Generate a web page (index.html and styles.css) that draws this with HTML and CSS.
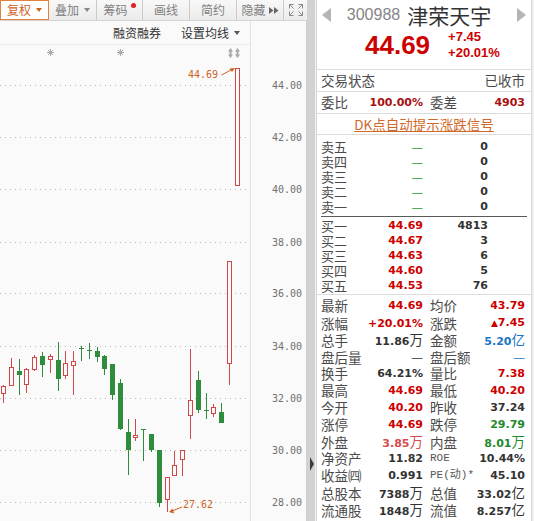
FILE: index.html
```html
<!DOCTYPE html>
<html lang="zh-CN">
<head>
  <meta charset="UTF-8" />
  <title>300988 津荣天宇</title>
  <link rel="stylesheet" href="styles.css">
</head>
<body>
  <div class="page">
    <!-- K线区 -->
    <section class="chart">
      <div class="toolbar">
        <span class="tb-btn tb-fq tb-active">复权<i class="caret"></i></span>
        <span class="tb-btn tb-add">叠加<i class="caret"></i></span>
        <span class="tb-btn tb-chip">筹码<i class="dot"></i></span>
        <span class="tb-btn">画线</span>
        <span class="tb-btn">简约</span>
        <span class="tb-btn">隐藏<svg class="ff" width="10" height="7" viewBox="0 0 10 7"><path d="M0 0L4.5 3.5L0 7ZM5 0L9.5 3.5L5 7Z"/></svg></span>
        <span class="tb-btn tb-full">
          <svg width="16" height="14" viewBox="0 0 16 14"><path d="M1.5 5.5V1.5H5.5M1.5 1.5L5.5 5.5M10.5 1.5H14.5V5.5M14.5 1.5L10.5 5.5M1.5 8.5V12.5H5.5M1.5 12.5L5.5 8.5M10.5 12.5H14.5V8.5M14.5 12.5L10.5 8.5"/></svg>
        </span>
      </div>
      <div class="chart-main">
        <div class="plot">
          <div class="plot-head"><span>融资融券</span><span class="ma-set">设置均线<i class="caret dark"></i></span></div>
          <svg class="kline" width="250" height="476" viewBox="0 45 250 476">
            <g class="grid">
              <path d="M0 85.5H250M0 137.5H250M0 189.5H250M0 242.5H250M0 293.5H250M0 346.5H250M0 398.5H250M0 450.5H250M0 502.5H250"/>
            </g>
            <g class="marks">
              <g transform="translate(50.5 52.5)"><path d="M-3.5 0H3.5M0 -3.5V3.5M-2.5 -2.5L2.5 2.5M-2.5 2.5L2.5 -2.5"/><circle r="1.8"/></g>
              <g transform="translate(120.5 52.5)"><path d="M-3.5 0H3.5M0 -3.5V3.5M-2.5 -2.5L2.5 2.5M-2.5 2.5L2.5 -2.5"/><circle r="1.8"/></g>
              <path class="updown" d="M230.5 48L233 51.5H228ZM229.5 51.5H231.5V54.5H229.5ZM230.5 58L233 54.5H228ZM237.5 48L240 51.5H235ZM236.5 51.5H238.5V54.5H236.5ZM237.5 58L240 54.5H235Z"/>
            </g>
            <path class="wick-up" d="M3.5 385V386M3.5 393V403M11.5 358V367M26.5 368V369M26.5 384V393M34.5 355V357M34.5 369V371M50.5 354V356M50.5 359V373M65.5 351V363M65.5 375V379M73.5 351V361M73.5 365V395M135.5 419V435M135.5 437V441M167.5 499V512M174.5 451V465M182.5 459V476M190.5 349V400M190.5 415V439M213.5 404V407M213.5 413V417M229.5 363V385"/>
            <g class="up">
              <rect x="1.5" y="386.5" width="4" height="7"/>
              <rect x="9.5" y="367.5" width="4" height="18"/>
              <rect x="24.5" y="369.5" width="4" height="15"/>
              <rect x="32.5" y="357.5" width="4" height="12"/>
              <rect x="48.5" y="356.5" width="4" height="3"/>
              <rect x="63.5" y="363.5" width="4" height="12"/>
              <rect x="71.5" y="361.5" width="4" height="4"/>
              <rect x="133.5" y="435.5" width="4" height="2"/>
              <rect x="165.5" y="477.5" width="4" height="22"/>
              <rect x="172.5" y="465.5" width="4" height="10"/>
              <rect x="180.5" y="450.5" width="4" height="9"/>
              <rect x="188.5" y="400.5" width="4" height="15"/>
              <rect x="211.5" y="407.5" width="4" height="6"/>
              <rect x="227.5" y="261.5" width="4" height="102"/>
              <rect x="235.5" y="68.5" width="4" height="117"/>
            </g>
            <path class="wick-down" d="M19.5 359V395M42.5 352V377M58.5 342V391M97.5 347V362M104.5 355V375M112.5 364V400M120.5 379V430M128.5 419V475M151.5 434V452M159.5 450V507M198.5 371V413M221.5 403V423M81.5 346V361M89.5 343V359M143.5 429V461M206.5 393V419M79 348.5H84M87 350.5H92M141 429.5H146M204 410.5H209"/>
            <g class="down">
              <rect x="17" y="371" width="5" height="4"/>
              <rect x="40" y="356" width="5" height="9"/>
              <rect x="56" y="360" width="5" height="19"/>
              <rect x="95" y="351" width="5" height="6"/>
              <rect x="102" y="356" width="5" height="13"/>
              <rect x="110" y="364" width="5" height="31"/>
              <rect x="118" y="383" width="5" height="46"/>
              <rect x="126" y="432" width="5" height="18"/>
              <rect x="149" y="434" width="5" height="16"/>
              <rect x="157" y="450" width="5" height="53"/>
              <rect x="196" y="380" width="5" height="30"/>
              <rect x="219" y="412" width="5" height="11"/>
            </g>
            <g class="note">
              <text x="188" y="78">44.69</text>
              <path d="M221.5 75L232 69.5"/>
              <polygon points="235,68 229.5,68.5 232,72"/>
              <text x="183" y="508">27.62</text>
              <path d="M182 507L172 511"/>
              <polygon points="169,512 174,513.5 172.5,508.5"/>
            </g>
          </svg>
        </div>
        <svg class="axis" width="55" height="500" viewBox="251 21 55 500">
          <text x="272" y="88.5">44.00</text>
          <text x="272" y="141">42.00</text>
          <text x="272" y="193">40.00</text>
          <text x="272" y="245.5">38.00</text>
          <text x="272" y="297">36.00</text>
          <text x="272" y="349.5">34.00</text>
          <text x="272" y="401.5">32.00</text>
          <text x="272" y="453.5">30.00</text>
          <text x="272" y="506">28.00</text>
        </svg>
      </div>
    </section>

    <div class="divider"><i class="tri"></i></div>

    <!-- 报价面板 -->
    <section class="quote">
      <div class="q-head">
        <i class="arrow arrow-l"></i>
        <div class="q-title"><span class="q-code">300988</span><span class="q-name">津荣天宇</span></div>
        <i class="arrow arrow-r"></i>
      </div>
      <div class="q-price">
        <span class="q-last">44.69</span>
        <div class="q-chg"><span>+7.45</span><span>+20.01%</span></div>
      </div>
      <div class="q-row q-status"><span>交易状态</span><span>已收市</span></div>
      <div class="q-row kv q-wei"><span>委比</span><b class="v dred">100.00%</b><span>委差</span><b class="v dred">4903</b></div>
      <div class="q-row q-dk"><a>DK点自动提示涨跌信号</a></div>

      <div class="q-row book">
        <div class="ob"><span>卖五</span><b class="v dash">—</b><b class="v">0</b></div>
        <div class="ob"><span>卖四</span><b class="v dash">—</b><b class="v">0</b></div>
        <div class="ob"><span>卖三</span><b class="v dash">—</b><b class="v">0</b></div>
        <div class="ob"><span>卖二</span><b class="v dash">—</b><b class="v">0</b></div>
        <div class="ob"><span>卖一</span><b class="v dash">—</b><b class="v">0</b></div>
        <div class="book-sep"></div>
        <div class="ob"><span>买一</span><b class="v red">44.69</b><b class="v">4813</b></div>
        <div class="ob"><span>买二</span><b class="v red">44.67</b><b class="v">3</b></div>
        <div class="ob"><span>买三</span><b class="v red">44.63</b><b class="v">6</b></div>
        <div class="ob"><span>买四</span><b class="v red">44.60</b><b class="v">5</b></div>
        <div class="ob"><span>买五</span><b class="v red">44.53</b><b class="v">76</b></div>
      </div>

      <div class="q-row stats">
        <div class="kv"><span>最新</span><b class="v red">44.69</b><span>均价</span><b class="v red">43.79</b></div>
        <div class="kv"><span>涨幅</span><b class="v red">+20.01%</b><span>涨跌</span><b class="v red"><small>▲</small>7.45</b></div>
        <div class="kv"><span>总手</span><b class="v">11.86<span class="u">万</span></b><span>金额</span><b class="v blue">5.20<span class="u">亿</span></b></div>
        <div class="kv"><span>盘后量</span><b class="v"><span class="u">—</span></b><span>盘后额</span><b class="v blue"><span class="u">—</span></b></div>
        <div class="kv"><span>换手</span><b class="v">64.21%</b><span>量比</span><b class="v red">7.38</b></div>
        <div class="kv"><span>最高</span><b class="v red">44.69</b><span>最低</span><b class="v red">40.20</b></div>
        <div class="kv"><span>今开</span><b class="v red">40.20</b><span>昨收</span><b class="v">37.24</b></div>
        <div class="kv"><span>涨停</span><b class="v red">44.69</b><span>跌停</span><b class="v green">29.79</b></div>
        <div class="kv"><span>外盘</span><b class="v lred">3.85<span class="u">万</span></b><span>内盘</span><b class="v green">8.01<span class="u">万</span></b></div>
        <div class="kv"><span>净资产</span><b class="v">11.82</b><span class="lat">ROE</span><b class="v">10.44%</b></div>
        <div class="kv"><span>收益㈣</span><b class="v">0.991</b><span class="lat">PE(动)*</span><b class="v">45.10</b></div>
        <div class="kv"><span>总股本</span><b class="v">7388<span class="u">万</span></b><span>总值</span><b class="v">33.02<span class="u">亿</span></b></div>
        <div class="kv"><span>流通股</span><b class="v">1848<span class="u">万</span></b><span>流值</span><b class="v">8.257<span class="u">亿</span></b></div>
      </div>
    </section>
  </div>
</body>
</html>
```

FILE: styles.css
```css
body {
  margin: 0;
  background: #f0f0f0;
  font-family: "Noto Sans CJK SC", sans-serif;
}

.page {
  display: flex;
  width: 534px;
  height: 521px;
  overflow: hidden;
}

/* chart */
.chart {
  width: 307px;
  flex-shrink: 0;
  background: #fafafa;
}

.toolbar {
  display: flex;
  height: 20px;
  border-bottom: 1px solid #d4d4d4;
  background: linear-gradient(#f8f8f8, #ebebeb);
}

.tb-btn {
  display: flex;
  align-items: center;
  justify-content: center;
  gap: 5px;
  width: 47px;
  box-sizing: border-box;
  border-right: 1px solid #cacaca;
  font-size: 12px;
  line-height: 20px;
  color: #808080;
}

.tb-fq { width: 49px; }
.tb-add { width: 48px; }
.tb-chip { width: 46px; gap: 3px; }
.tb-full { width: 23px; border-right: none; }

.tb-active {
  border: 1px solid #e2823f;
  background: #fff;
  color: #d0621e;
}

.caret {
  width: 0;
  height: 0;
  border-left: 3px solid transparent;
  border-right: 3px solid transparent;
  border-top: 4px solid #888;
}

.tb-active .caret { border-top-color: #d0621e; }
.caret.dark { border-top-color: #555; }

.dot {
  width: 5px;
  height: 5px;
  border-radius: 50%;
  background: #e32020;
  margin-top: -9px;
}

.ff { fill: #666; margin-left: -2px; }

.tb-full svg {
  fill: none;
  stroke: #8a8a8a;
  stroke-width: 1;
}

.chart-main {
  display: flex;
}

.plot {
  width: 250px;
  border-right: 1px solid #e2e2e2;
}

.plot-head {
  display: flex;
  justify-content: flex-end;
  gap: 20px;
  height: 23px;
  padding-right: 10px;
  border-bottom: 1px solid #ebebeb;
  font-size: 12px;
  line-height: 23px;
  color: #333;
}

.ma-set {
  display: flex;
  align-items: center;
  gap: 5px;
}

.kline { display: block; }

.grid path {
  stroke: #b8b8b8;
  stroke-width: 1;
  stroke-dasharray: 1 4;
}

.marks { fill: #a8a8a8; }
.marks path { stroke: #a8a8a8; stroke-width: 1; }
.marks .updown { stroke: none; }

.wick-up { stroke: #d04848; stroke-width: 1; fill: none; }
.up rect { fill: #fafafa; stroke: #d04848; stroke-width: 1; }
.wick-down { stroke: #2f8c3c; stroke-width: 1; fill: none; }
.down rect { fill: #2f8c3c; }

.note text {
  font-family: "DejaVu Sans Mono", monospace;
  font-size: 10px;
  fill: #d0621e;
}

.note path { stroke: #d0621e; stroke-width: 1; }
.note polygon { fill: #d0621e; }

.axis {
  display: block;
  width: 55px;
  border-right: 1px solid #cfcfcf;
}

.axis text {
  font-family: "DejaVu Sans Mono", monospace;
  font-size: 10px;
  fill: #707070;
}

.divider {
  display: flex;
  flex-direction: column;
  justify-content: flex-end;
  width: 8px;
  flex-shrink: 0;
  box-sizing: border-box;
  padding: 0 0 50px 3px;
  background: #d2d2d2;
}

.tri {
  width: 0;
  height: 0;
  border-left: 4px solid #3c3c3c;
  border-top: 7px solid transparent;
  border-bottom: 7px solid transparent;
}

/* quote panel */
.quote {
  width: 216px;
  flex-shrink: 0;
  box-sizing: border-box;
  margin-left: 1px;
  border-left: 1px solid #d8d8d8;
  border-right: 1px solid #d8d8d8;
  background: #fff;
  font-size: 13.5px;
  color: #4a4a4a;
}

.q-head {
  display: flex;
  align-items: center;
  justify-content: space-between;
  height: 30px;
  padding: 0 5px;
}

.arrow {
  width: 0;
  height: 0;
  border-top: 7px solid transparent;
  border-bottom: 7px solid transparent;
}

.arrow-l { border-right: 9px solid #b4b4b4; }
.arrow-r { border-left: 9px solid #b4b4b4; }

.q-title {
  display: flex;
  align-items: center;
  gap: 7px;
  margin-right: 10px;
}

.q-code {
  font-family: "Liberation Sans", sans-serif;
  font-size: 16px;
  color: #858585;
}

.q-name {
  font-size: 21px;
  line-height: 24px;
  color: #333;
}

.q-price {
  display: flex;
  align-items: center;
  gap: 18px;
  height: 30px;
  padding: 0 0 9px 48px;
  color: #cc0000;
  font-family: "Liberation Sans", sans-serif;
  font-weight: bold;
}

.q-last {
  font-size: 26px;
  line-height: 1;
}

.q-chg {
  display: flex;
  flex-direction: column;
  font-size: 13px;
  line-height: 16px;
}

.q-row {
  border-top: 1px solid #dcdcdc;
}

.q-status {
  display: flex;
  justify-content: space-between;
  height: 21px;
  line-height: 21px;
  padding: 0 6px 0 4px;
}

.kv {
  display: grid;
  grid-template-columns: 44px 58px 51px 51px;
  align-items: center;
  height: 17px;
  line-height: 17px;
  padding-left: 4px;
  white-space: nowrap;
}

.kv > span:nth-child(3) { padding-left: 7px; }

.q-wei { height: 21px; line-height: 21px; }

.v {
  font-family: "DejaVu Sans", sans-serif;
  font-size: 11px;
  font-weight: bold;
  text-align: right;
  color: #333;
}

.v .u {
  font-family: "Noto Sans CJK SC", sans-serif;
  font-size: 13.5px;
  font-weight: normal;
}

.v small { font-size: 9px; }

.lat {
  font-family: "Liberation Mono", "Noto Sans CJK SC", monospace;
  font-size: 11px;
  color: #555;
}

.red { color: #cc0000; }
.dred { color: #a81010; }
.lred { color: #d24c4c; }
.green { color: #1f8a2e; }
.blue { color: #1c74c4; }

.q-dk {
  height: 20px;
  line-height: 20px;
  text-align: center;
}

.q-dk a {
  color: #d0682a;
  text-decoration: underline;
}

.book {
  padding: 4px 0 1px;
  font-size: 13px;
}

.ob {
  display: grid;
  grid-template-columns: 44px 58px 65px;
  align-items: center;
  height: 15px;
  line-height: 15px;
  padding-left: 4px;
}

.ob .dash {
  font-family: "Noto Sans CJK SC", sans-serif;
  font-weight: normal;
  font-size: 13px;
  color: #1f9a30;
}

.book-sep {
  height: 1px;
  margin: 2px 4px 1px 4px;
  background: #5a5a5a;
}

.stats {
  padding-top: 2px;
}
```
